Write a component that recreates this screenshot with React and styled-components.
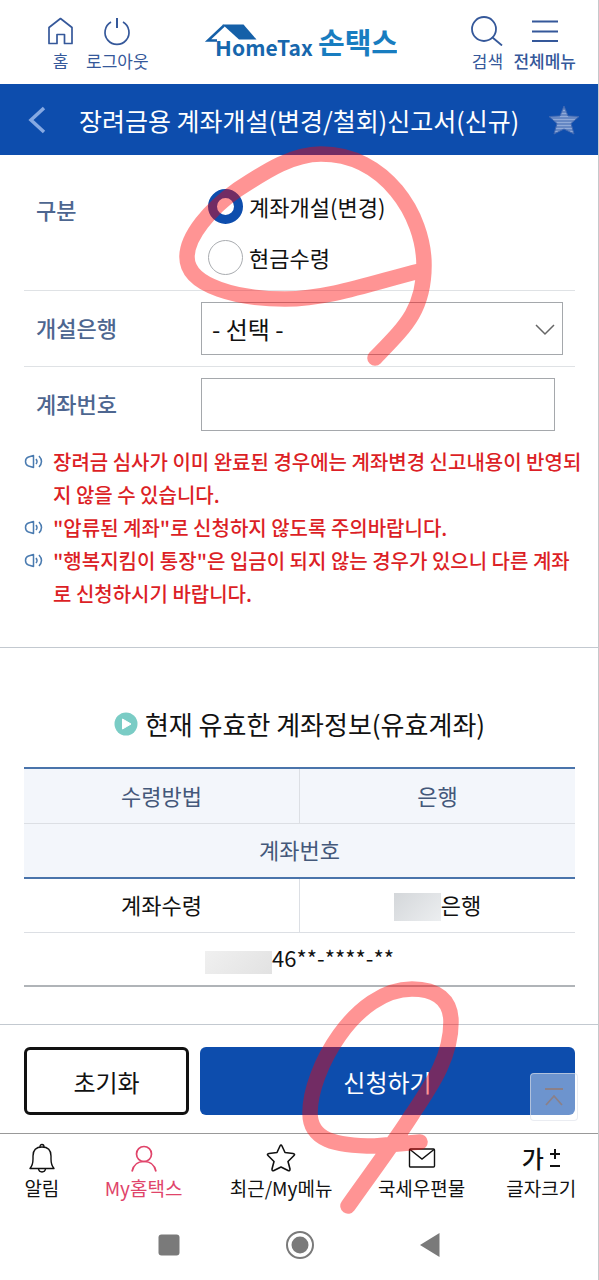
import React, { useState } from 'react'
import styled, { createGlobalStyle } from 'styled-components'

const GlobalStyle = createGlobalStyle`
  * { box-sizing: border-box; }
  body {
    margin: 0;
    background: #fff;
    color: #111;
    font-family: "Noto Sans CJK KR", sans-serif;
  }
  button, input, select { font-family: inherit; }
`

const Page = styled.div`
  position: relative;
  min-height: 100vh;
  display: flex;
  flex-direction: column;
  border-right: 1px solid #c6c8cb;
  overflow: hidden;
`

const Header = styled.header`
  display: grid;
  grid-template-columns: 1fr auto 1fr;
  height: 84px;
  padding-top: 16px;
`

const HeaderGroup = styled.div`
  display: flex;
  align-items: flex-start;
  gap: ${(p) => (p.$end ? '10px' : '12px')};
  justify-content: ${(p) => (p.$end ? 'flex-end' : 'flex-start')};
  padding: ${(p) => (p.$end ? '0 22px 0 0' : '0 0 0 47px')};
`

const HeaderButton = styled.button`
  display: flex;
  flex-direction: column;
  align-items: center;
  gap: 3px;
  padding: 0;
  border: 0;
  background: none;
  color: #35589a;
  font-size: 17px;
  line-height: 24px;
  font-weight: ${(p) => (p.$strong ? 500 : 400)};
  white-space: nowrap;
  cursor: pointer;
`

const LogoLink = styled.a`
  display: block;
  height: 48px;
`

const TitleBar = styled.div`
  display: flex;
  align-items: center;
  justify-content: space-between;
  height: 71px;
  padding: 0 18px 0 24px;
  background: #0d4dad;
  color: #fff;
`

const TitleButton = styled.button`
  display: flex;
  padding: 0;
  border: 0;
  background: none;
  cursor: pointer;
`

const Title = styled.h1`
  margin: 0;
  font-size: 25px;
  line-height: 36px;
  font-weight: 400;
  white-space: nowrap;
`

const Form = styled.form`
  padding: 15px 23px 0 24px;
`

const Field = styled.div`
  display: grid;
  grid-template-columns: 165px 1fr;
  align-items: ${(p) => (p.$top ? 'start' : 'center')};
  padding: 11px 0 11px 12px;
  border-bottom: ${(p) => (p.$last ? '0' : '1px solid #dfe2e5')};
`

const FieldLabel = styled.label`
  color: #4d6690;
  font-size: 22px;
  line-height: 32px;
  font-weight: 500;
  padding: ${(p) => (p.$top ? '12px 0 0' : '0 0 4px')};
`

const RadioGroup = styled.div`
  display: flex;
  flex-direction: column;
  gap: 16px;
  padding: 8px 0 4px 7px;
`

const RadioLabel = styled.label`
  display: flex;
  align-items: center;
  gap: 6px;
  font-size: 22px;
  line-height: 35px;
`

const Radio = styled.input`
  appearance: none;
  width: 35px;
  height: 35px;
  margin: 0;
  border: 1px solid #a9acb0;
  border-radius: 50%;
  background: #fff;

  &:checked {
    border: 9px solid #0d4dad;
  }
`

const SelectBox = styled.div`
  position: relative;
  margin-right: 12px;

  svg {
    position: absolute;
    right: 8px;
    top: 20px;
    pointer-events: none;
  }
`

const Select = styled.select`
  appearance: none;
  display: block;
  width: 100%;
  height: 53px;
  padding: 0 10px;
  border: 1px solid #a5a8ac;
  border-radius: 0;
  background: #fff;
  color: #111;
  font-size: 24px;
`

const AccountInput = styled.input`
  height: 53px;
  margin-right: 20px;
  padding: 0 10px;
  border: 1px solid #a5a8ac;
  font-size: 24px;
`

const NoticeList = styled.ul`
  margin: 0;
  padding: 3px 15px 37px 24px;
  border-bottom: 1px solid #c3c9d0;
  list-style: none;
`

const Notice = styled.li`
  display: grid;
  grid-template-columns: 20px 1fr;
  gap: 9px;
  color: #dc1f26;
  font-size: 20px;
  line-height: 33px;
  font-weight: 500;
  word-break: break-all;

  svg { margin-top: 9px; }
`

const Account = styled.section`
  padding: 56px 23px 37px 24px;
  border-bottom: 1px solid #c3c9d0;
`

const AccountTitle = styled.h2`
  display: flex;
  align-items: center;
  justify-content: center;
  gap: 7px;
  margin: 0 0 23px;
  font-size: 26px;
  line-height: 40px;
  font-weight: 400;
  white-space: nowrap;
`

const Table = styled.table`
  width: 100%;
  table-layout: fixed;
  border-collapse: collapse;
  border-top: 2px solid #4a74ab;
  border-bottom: 2px solid #b0b4b8;
  font-size: 22px;
  line-height: 32px;
  text-align: center;

  thead { border-bottom: 2px solid #4a74ab; }

  th, td {
    height: 55px;
    padding: 0 0 2px;
    font-weight: 400;
  }
  td { height: 54px; }
  th {
    background: #f3f6fb;
    color: #44587a;
  }
  tr + tr > * { border-top: 1px solid #dcdfe4; }
  tr > * + * { border-left: 1px solid #dcdfe4; }
`

const Masked = styled.span`
  display: inline-block;
  width: ${(p) => p.$width}px;
  height: ${(p) => p.$height}px;
  vertical-align: -7px;
  background: linear-gradient(135deg, ${(p) => p.$from}, ${(p) => p.$to});
`

const Actions = styled.div`
  position: relative;
  display: grid;
  grid-template-columns: 165px 1fr;
  gap: 11px;
  padding: 22px 23px 18px 24px;
  border-bottom: 1px solid #999;
`

const ActionButton = styled.button`
  height: 68px;
  border: ${(p) => (p.$primary ? '0' : '3px solid #111')};
  border-radius: 6px;
  background: ${(p) => (p.$primary ? '#0d4dad' : '#fff')};
  color: ${(p) => (p.$primary ? '#fff' : '#111')};
  font-size: 24px;
  cursor: pointer;
`

const TopButton = styled.button`
  position: absolute;
  right: 20px;
  bottom: 12px;
  width: 48px;
  height: 48px;
  display: flex;
  align-items: center;
  justify-content: center;
  padding: 0;
  border: 1px solid rgba(220, 224, 232, 0.6);
  border-radius: 4px;
  background: rgba(255, 255, 255, 0.4);
  cursor: pointer;
`

const Tabs = styled.nav`
  display: grid;
  grid-template-columns: 14fr 20fr 26fr 21fr 19fr;
  height: 75px;
  padding-top: 8px;
`

const Tab = styled.a`
  display: flex;
  flex-direction: column;
  align-items: center;
  color: ${(p) => (p.$active ? '#e0446a' : '#111')};
  font-size: 19px;
  line-height: 28px;
  text-decoration: none;
  white-space: nowrap;
`

const TabIcon = styled.span`
  display: flex;
  align-items: center;
  gap: 5px;
  height: 32px;
  font-size: 24px;
  line-height: 24px;
  font-weight: 500;
`

const SystemBar = styled.div`
  display: flex;
  align-items: center;
  justify-content: center;
  gap: 106px;
  height: 71px;
`

const SystemButton = styled.button`
  display: flex;
  padding: 0;
  border: 0;
  background: none;
`

// pen marks drawn over the screen
const PenMarks = styled.svg`
  position: absolute;
  left: 0;
  top: 0;
  pointer-events: none;
`

const notices = [
  '장려금 심사가 이미 완료된 경우에는 계좌변경 신고내용이 반영되지 않을 수 있습니다.',
  '"압류된 계좌"로 신청하지 않도록 주의바랍니다.',
  '"행복지킴이 통장"은 입금이 되지 않는 경우가 있으니 다른 계좌로 신청하시기 바랍니다.',
]

function Logo() {
  return (
    <svg width="196" height="48" viewBox="0 0 196 48" role="img" aria-label="HomeTax 손택스">
      <path d="M21.500 8.500 H42.500 L55.500 23.500 H38 Z" fill="#1560a8" />
      <path d="M23 9.500 L7 24.500 H16" fill="none" stroke="#1560a8" strokeWidth="2.500" />
      <g fill="#1767ad" fontWeight="700">
        <text x="14" y="40" fontFamily="Open Sans" fontSize="22">H</text>
        <text x="31" y="40" fontFamily="Noto Sans CJK KR" fontSize="21">omeTax</text>
        <text x="117" y="38" fontFamily="Noto Sans CJK KR" fontSize="29" fill="#187dc0">손택스</text>
      </g>
    </svg>
  )
}

function SpeakerIcon() {
  return (
    <svg width="20" height="15" viewBox="0 0 20 15" fill="none" stroke="#4a7bb0" strokeWidth="1.500">
      <path d="M9.500 1.500 V13.500 L4.500 12 Q1.500 11 1.500 7.500 Q1.500 4 4.500 3 Z" strokeLinejoin="round" />
      <path d="M12 5 Q14 7.500 12 10" />
      <path d="M15 2 Q20 7.500 15 13" />
    </svg>
  )
}

function App() {
  const [method, setMethod] = useState('account')

  return (
    <Page>
      <GlobalStyle />

      <Header>
        <HeaderGroup>
          <HeaderButton type="button">
            <svg width="27" height="30" viewBox="0 0 27 30" fill="none" stroke="currentColor" strokeWidth="1.700">
              <path d="M2 27.500 V11.500 L13.500 2.500 L25 11.500 V27.500 H17.500 V18.500 H10 V27.500 Z" strokeLinejoin="round" />
            </svg>
            홈
          </HeaderButton>
          <HeaderButton type="button">
            <svg width="28" height="30" viewBox="0 0 28 30" fill="none" stroke="currentColor" strokeWidth="1.700">
              <path d="M8 6 A12 12 0 1 0 20 6" />
              <path d="M14 2 V12" strokeWidth="2" />
            </svg>
            로그아웃
          </HeaderButton>
        </HeaderGroup>
        <LogoLink href="#home">
          <Logo />
        </LogoLink>
        <HeaderGroup $end>
          <HeaderButton type="button">
            <svg width="32" height="30" viewBox="0 0 32 30" fill="none" stroke="currentColor" strokeWidth="1.800">
              <circle cx="13" cy="13" r="12" />
              <path d="M21.500 21.500 L31 29.500" />
            </svg>
            검색
          </HeaderButton>
          <HeaderButton type="button" $strong>
            <svg width="28" height="30" viewBox="0 0 28 30" stroke="currentColor" strokeWidth="2">
              <path d="M1 5.500 H27 M1 15.500 H27 M1 25 H27" />
            </svg>
            전체메뉴
          </HeaderButton>
        </HeaderGroup>
      </Header>

      <TitleBar>
        <TitleButton type="button" aria-label="뒤로">
          <svg width="26" height="28" viewBox="0 0 26 28" fill="none" stroke="#86a9e2" strokeWidth="3.500">
            <path d="M20 2 L7 14 L20 26" />
          </svg>
        </TitleButton>
        <Title>장려금용 계좌개설(변경/철회)신고서(신규)</Title>
        <TitleButton type="button" aria-label="즐겨찾기">
          <svg width="32" height="32" viewBox="0 0 32 32">
            <defs>
              <pattern id="stripe" width="32" height="3" patternUnits="userSpaceOnUse">
                <rect width="32" height="3" fill="#6688c4" />
                <rect width="32" height="1" fill="#90aad8" />
              </pattern>
            </defs>
            <path
              d="M16 2 L20 12 L31 12.500 L23 19.500 L26 30 L16 25 L6 30 L9 19.500 L1 12.500 L12 12 Z"
              fill="url(#stripe)"
              stroke="#3f68b2"
            />
          </svg>
        </TitleButton>
      </TitleBar>

      <Form onSubmit={(e) => e.preventDefault()}>
        <Field $top>
          <FieldLabel as="span" id="method-label" $top>구분</FieldLabel>
          <RadioGroup role="radiogroup" aria-labelledby="method-label">
            <RadioLabel>
              <Radio type="radio" name="method" checked={method === 'account'} onChange={() => setMethod('account')} />
              계좌개설(변경)
            </RadioLabel>
            <RadioLabel>
              <Radio type="radio" name="method" checked={method === 'cash'} onChange={() => setMethod('cash')} />
              현금수령
            </RadioLabel>
          </RadioGroup>
        </Field>
        <Field>
          <FieldLabel htmlFor="bank">개설은행</FieldLabel>
          <SelectBox>
            <Select id="bank">
              <option>- 선택 -</option>
            </Select>
            <svg width="20" height="14" viewBox="0 0 20 14" fill="none" stroke="#666" strokeWidth="1.500">
              <path d="M1 3 L10 12 L19 3" />
            </svg>
          </SelectBox>
        </Field>
        <Field $last>
          <FieldLabel htmlFor="account">계좌번호</FieldLabel>
          <AccountInput id="account" type="text" />
        </Field>
      </Form>

      <NoticeList>
        {notices.map((text) => (
          <Notice key={text}>
            <SpeakerIcon />
            <span>{text}</span>
          </Notice>
        ))}
      </NoticeList>

      <Account>
        <AccountTitle>
          <svg width="24" height="24" viewBox="0 0 24 24">
            <circle cx="12" cy="12" r="11.500" fill="#7accc5" />
            <path d="M8.500 7 L17 12 L8.500 17 Z" fill="#fff" stroke="#fff" strokeLinejoin="round" />
          </svg>
          현재 유효한 계좌정보(유효계좌)
        </AccountTitle>
        <Table>
          <thead>
            <tr>
              <th scope="col">수령방법</th>
              <th scope="col">은행</th>
            </tr>
            <tr>
              <th scope="col" colSpan="2">계좌번호</th>
            </tr>
          </thead>
          <tbody>
            <tr>
              <td>계좌수령</td>
              <td><Masked $width={47} $height={28} $from="#d4d7da" $to="#eceef0" />은행</td>
            </tr>
            <tr>
              <td colSpan="2"><Masked $width={67} $height={23} $from="#f0f0f0" $to="#e2e2e2" />46**-****-**</td>
            </tr>
          </tbody>
        </Table>
      </Account>

      <Actions>
        <ActionButton type="button">초기화</ActionButton>
        <ActionButton type="button" $primary>신청하기</ActionButton>
        <TopButton type="button" aria-label="맨 위로">
          <svg width="20" height="20" viewBox="0 0 20 20" fill="none" stroke="#8b8088" strokeWidth="1.800">
            <path d="M1 2 H19 M2 18 L10 9 L18 18" />
          </svg>
        </TopButton>
      </Actions>

      <Tabs>
        <Tab href="#alarm">
          <TabIcon>
            <svg width="28" height="30" viewBox="0 0 28 30" fill="none" stroke="currentColor" strokeWidth="1.400" strokeLinejoin="round">
              <path d="M2 25.500 Q5 22 5 16 V13 Q5 4 14 4 Q23 4 23 13 V16 Q23 22 26 25.500 Z" />
              <path d="M12 4 Q12 1.500 14 1.500 Q16 1.500 16 4 M10.500 26 Q11 29 14 29 Q17 29 17.500 26" />
            </svg>
          </TabIcon>
          알림
        </Tab>
        <Tab href="#my" $active>
          <TabIcon>
            <svg width="28" height="30" viewBox="0 0 28 30" fill="none" stroke="currentColor" strokeWidth="1.700">
              <circle cx="14" cy="11" r="7.500" />
              <path d="M2 28.500 Q4 18.500 14 18.500 Q24 18.500 26 28.500" />
            </svg>
          </TabIcon>
          My홈택스
        </Tab>
        <Tab href="#recent">
          <TabIcon>
            <svg width="30" height="30" viewBox="0 0 30 30" fill="none" stroke="currentColor" strokeWidth="1.600" strokeLinejoin="round">
              <path d="M14 3 Q15 1 16 3 L19 9.500 L27 10.500 Q29.500 11 28 12.500 L22 18.500 L24 26 Q24 28.500 22 27.500 L15 24 L8 27.500 Q6 28.500 6 26 L8 18.500 L2 12.500 Q.5 11 3 10.500 L11 9.500 Z" />
            </svg>
          </TabIcon>
          최근/My메뉴
        </Tab>
        <Tab href="#post">
          <TabIcon>
            <svg width="28" height="22" viewBox="0 0 28 22" fill="none" stroke="currentColor" strokeWidth="1.400">
              <rect x="1.500" y="2" width="25" height="18" rx="1" />
              <path d="M2 2.500 L14 12 L26 2.500" />
            </svg>
          </TabIcon>
          국세우편물
        </Tab>
        <Tab href="#size">
          <TabIcon>
            가
            <svg width="12" height="22" viewBox="0 0 12 22" stroke="currentColor" strokeWidth="2">
              <path d="M1 7 H11 M6 2 V12 M1 19 H11" />
            </svg>
          </TabIcon>
          글자크기
        </Tab>
      </Tabs>

      <SystemBar>
        <SystemButton type="button" aria-label="최근 앱">
          <svg width="22" height="22" viewBox="0 0 22 22"><rect x=".5" y=".5" width="21" height="21" rx="3" fill="#7a7a7a" /></svg>
        </SystemButton>
        <SystemButton type="button" aria-label="홈 화면">
          <svg width="28" height="28" viewBox="0 0 28 28">
            <circle cx="14" cy="14" r="13" fill="none" stroke="#7a7a7a" strokeWidth="2" />
            <circle cx="14" cy="14" r="8.500" fill="#7a7a7a" />
          </svg>
        </SystemButton>
        <SystemButton type="button" aria-label="이전">
          <svg width="20" height="24" viewBox="0 0 20 24"><path d="M0 12 L19.500 0 V24 Z" fill="#7a7a7a" /></svg>
        </SystemButton>
      </SystemBar>

      <PenMarks width="599" height="1280" viewBox="0 0 599 1280" fill="none" stroke="#f00" strokeOpacity=".42" strokeWidth="15.500" strokeLinecap="round" strokeLinejoin="round">
        <path d="M375 358 C405 327 424 310 424 265 C424 215 385 154 321 154 C290 154 262 174 237 190 C210 209 187 236 187 257 C187 287 240 299 285 299 C330 299 378 281 420 271" />
        <path d="M348 1206 C372 1172 396 1140 413 1113 C434 1082 451 1055 451 1022 C451 1000 437 989 412 989 C355 989 310 1070 310 1113 C310 1140 335 1146 375 1146 L420 1142" />
      </PenMarks>
    </Page>
  )
}

export default App
